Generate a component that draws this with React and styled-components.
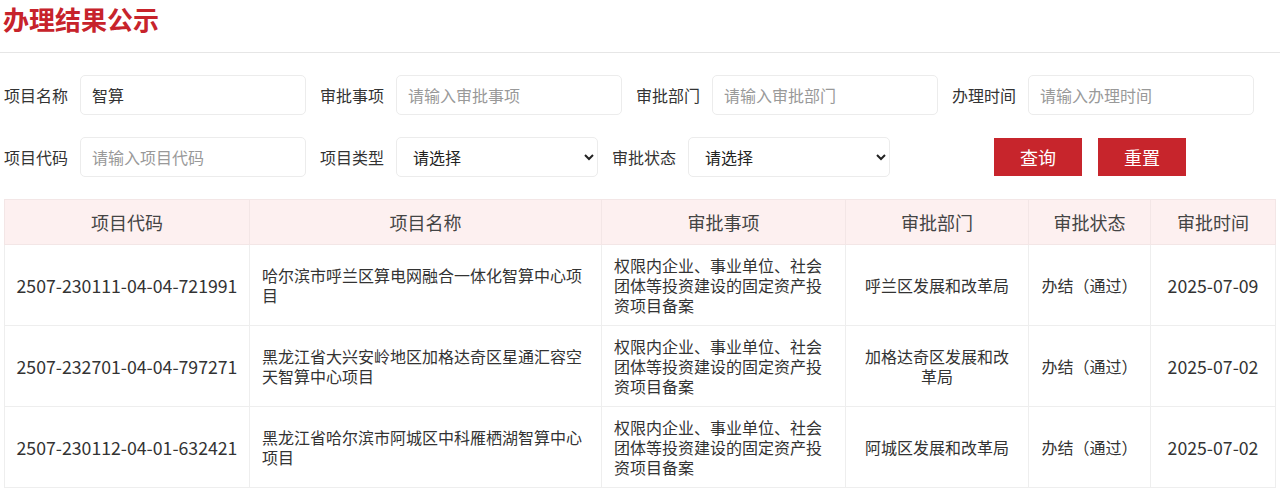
import styled, { createGlobalStyle } from 'styled-components';

const GlobalStyle = createGlobalStyle`
  body {
    margin: 0;
    background: #fff;
    font-family: "Noto Sans CJK SC", "Noto Sans", sans-serif;
    color: #333;
  }
`;

const Page = styled.div`
  padding: 0 5px 0 4px;
`;

const Title = styled.h1`
  margin: 0 -5px 0 -4px;
  padding: 3px 0 0 3px;
  height: 49px;
  font-size: 26px;
  font-weight: bold;
  color: #c7232b;
  line-height: 32px;
  border-bottom: 1px solid #e6e6e6;
`;

const Form = styled.div`
  padding-top: 22px;
  display: flex;
  flex-direction: column;
  gap: 22px;
`;

const FormRow = styled.div`
  display: flex;
  align-items: center;
  height: 40px;
`;

const Field = styled.div`
  display: flex;
  align-items: center;
  margin-right: 14px;
`;

const Label = styled.label`
  font-size: 16px;
  width: 64px;
  margin-right: 12px;
  white-space: nowrap;
  color: #333;
`;

const Input = styled.input`
  box-sizing: border-box;
  width: 226px;
  height: 40px;
  padding: 0 11px;
  border: 1px solid #ececec;
  border-radius: 5px;
  font-family: inherit;
  font-size: 16px;
  color: #333;
  outline: none;
  &::placeholder {
    color: #999;
  }
`;

const Select = styled.select`
  box-sizing: border-box;
  width: 202px;
  height: 40px;
  padding: 0 12px;
  border: 1px solid #ececec;
  border-radius: 5px;
  background: #fff;
  font-family: inherit;
  font-size: 16px;
  color: #222;
  outline: none;
`;

const Buttons = styled.div`
  display: flex;
  gap: 16px;
  margin-left: 90px;
  margin-top: -1px;
`;

const Button = styled.button`
  width: 88px;
  height: 38px;
  border: none;
  background: #c7252c;
  color: #fff;
  font-family: inherit;
  font-size: 18px;
  cursor: pointer;
`;

const Table = styled.table`
  margin-top: 22px;
  width: 1271px;
  border-collapse: collapse;
  table-layout: fixed;
`;

const Th = styled.th`
  height: 44px;
  padding: 0;
  background: #fdf0f0;
  border: 1px solid #f3e6e6;
  font-size: 18px;
  font-weight: normal;
  color: #444;
`;

const Td = styled.td`
  height: 81px;
  box-sizing: border-box;
  padding: ${(p) => (p.num ? '0 4px' : '0 12px')};
  border: 1px solid #eeeeee;
  line-height: 20px;
  color: #333;
  text-align: ${(p) => (p.left ? 'left' : 'center')};
  font-size: ${(p) => (p.num ? '17.7px' : '16px')};
  white-space: ${(p) => (p.num ? 'nowrap' : 'normal')};
`;

const rows = [
  {
    code: '2507-230111-04-04-721991',
    name: '哈尔滨市呼兰区算电网融合一体化智算中心项目',
    item: '权限内企业、事业单位、社会团体等投资建设的固定资产投资项目备案',
    dept: '呼兰区发展和改革局',
    status: '办结（通过）',
    date: '2025-07-09',
  },
  {
    code: '2507-232701-04-04-797271',
    name: '黑龙江省大兴安岭地区加格达奇区星通汇容空天智算中心项目',
    item: '权限内企业、事业单位、社会团体等投资建设的固定资产投资项目备案',
    dept: '加格达奇区发展和改革局',
    status: '办结（通过）',
    date: '2025-07-02',
  },
  {
    code: '2507-230112-04-01-632421',
    name: '黑龙江省哈尔滨市阿城区中科雁栖湖智算中心项目',
    item: '权限内企业、事业单位、社会团体等投资建设的固定资产投资项目备案',
    dept: '阿城区发展和改革局',
    status: '办结（通过）',
    date: '2025-07-02',
  },
];

const App = () => {
  return (
    <Page>
      <GlobalStyle />
      <Title>办理结果公示</Title>
      <Form>
        <FormRow>
          <Field>
            <Label>项目名称</Label>
            <Input defaultValue="智算" />
          </Field>
          <Field>
            <Label>审批事项</Label>
            <Input placeholder="请输入审批事项" />
          </Field>
          <Field>
            <Label>审批部门</Label>
            <Input placeholder="请输入审批部门" />
          </Field>
          <Field>
            <Label>办理时间</Label>
            <Input placeholder="请输入办理时间" />
          </Field>
        </FormRow>
        <FormRow>
          <Field>
            <Label>项目代码</Label>
            <Input placeholder="请输入项目代码" />
          </Field>
          <Field>
            <Label>项目类型</Label>
            <Select defaultValue="">
              <option value="">请选择</option>
            </Select>
          </Field>
          <Field>
            <Label>审批状态</Label>
            <Select defaultValue="">
              <option value="">请选择</option>
            </Select>
          </Field>
          <Buttons>
            <Button>查询</Button>
            <Button>重置</Button>
          </Buttons>
        </FormRow>
      </Form>
      <Table>
        <colgroup>
          <col style={{ width: 245 }} />
          <col style={{ width: 352 }} />
          <col style={{ width: 244 }} />
          <col style={{ width: 183 }} />
          <col style={{ width: 122 }} />
          <col style={{ width: 125 }} />
        </colgroup>
        <thead>
          <tr>
            <Th>项目代码</Th>
            <Th>项目名称</Th>
            <Th>审批事项</Th>
            <Th>审批部门</Th>
            <Th>审批状态</Th>
            <Th>审批时间</Th>
          </tr>
        </thead>
        <tbody>
          {rows.map((r) => (
            <tr key={r.code}>
              <Td num>{r.code}</Td>
              <Td left>{r.name}</Td>
              <Td left>{r.item}</Td>
              <Td>{r.dept}</Td>
              <Td>{r.status}</Td>
              <Td num>{r.date}</Td>
            </tr>
          ))}
        </tbody>
      </Table>
    </Page>
  );
};

export default App;
